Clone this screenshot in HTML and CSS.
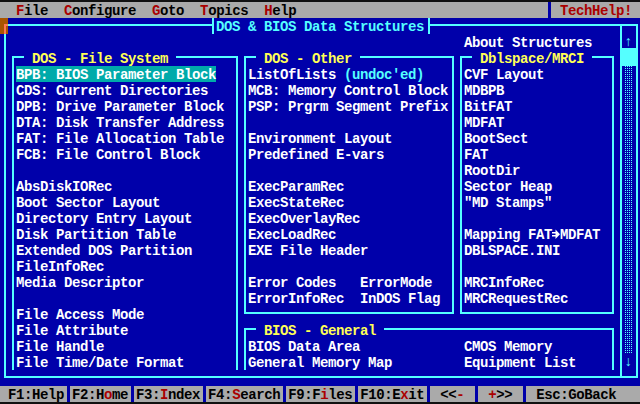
FILE: index.html
```html
<!DOCTYPE html>
<html>
<head>
<meta charset="utf-8">
<title>TechHelp! - DOS &amp; BIOS Data Structures</title>
<link rel="stylesheet" href="styles.css">
</head>
<body>
<div class="screen">
  <div class="menubar">
    <div class="menu-items t">  <span class="hot">F</span>ile  <span class="hot">C</span>onfigure  <span class="hot">G</span>oto  <span class="hot">T</span>opics  <span class="hot">H</span>elp</div>
    <div class="menu-sep"></div>
    <div class="brand t"> TechHelp!</div>
  </div>

  <div class="frame"></div>
  <div class="closebox"></div>
  <div class="title t">DOS &amp; BIOS Data Structures</div>
  <div class="about t">About Structures</div>

  <div class="box box-fs open"></div>
  <div class="legend t lg-fs"> DOS - File System </div>
  <div class="list list-fs">
    <div class="line"><span class="sel">BPB: BIOS Parameter Block</span></div>
    <div class="line">CDS: Current Directories</div>
    <div class="line">DPB: Drive Parameter Block</div>
    <div class="line">DTA: Disk Transfer Address</div>
    <div class="line">FAT: File Allocation Table</div>
    <div class="line">FCB: File Control Block</div>
    <div class="line"></div>
    <div class="line">AbsDiskIORec</div>
    <div class="line">Boot Sector Layout</div>
    <div class="line">Directory Entry Layout</div>
    <div class="line">Disk Partition Table</div>
    <div class="line">Extended DOS Partition</div>
    <div class="line">FileInfoRec</div>
    <div class="line">Media Descriptor</div>
    <div class="line"></div>
    <div class="line">File Access Mode</div>
    <div class="line">File Attribute</div>
    <div class="line">File Handle</div>
    <div class="line">File Time/Date Format</div>
  </div>

  <div class="box box-other"></div>
  <div class="legend t lg-other"> DOS - Other </div>
  <div class="list list-other">
    <div class="line">ListOfLists <span class="cy">(undoc'ed)</span></div>
    <div class="line">MCB: Memory Control Block</div>
    <div class="line">PSP: Prgrm Segment Prefix</div>
    <div class="line"></div>
    <div class="line">Environment Layout</div>
    <div class="line">Predefined E-vars</div>
    <div class="line"></div>
    <div class="line">ExecParamRec</div>
    <div class="line">ExecStateRec</div>
    <div class="line">ExecOverlayRec</div>
    <div class="line">ExecLoadRec</div>
    <div class="line">EXE File Header</div>
    <div class="line"></div>
    <div class="line">Error Codes   ErrorMode</div>
    <div class="line">ErrorInfoRec  InDOS Flag</div>
  </div>

  <div class="box box-dbl"></div>
  <div class="legend t lg-dbl"> Dblspace/MRCI </div>
  <div class="list list-dbl">
    <div class="line">CVF Layout</div>
    <div class="line">MDBPB</div>
    <div class="line">BitFAT</div>
    <div class="line">MDFAT</div>
    <div class="line">BootSect</div>
    <div class="line">FAT</div>
    <div class="line">RootDir</div>
    <div class="line">Sector Heap</div>
    <div class="line">"MD Stamps"</div>
    <div class="line"></div>
    <div class="line">Mapping FAT<svg class="arrow" width="8" height="16" viewBox="0 0 8 16"><rect x="0" y="6" width="4" height="1.5" fill="#fff"/><rect x="0" y="9" width="4" height="1.5" fill="#fff"/><polygon points="3.5,3.5 8,8.25 3.5,13" fill="#fff"/></svg>MDFAT</div>
    <div class="line">DBLSPACE.INI</div>
    <div class="line"></div>
    <div class="line">MRCInfoRec</div>
    <div class="line">MRCRequestRec</div>
  </div>

  <div class="box box-bios open"></div>
  <div class="legend t lg-bios"> BIOS - General </div>
  <div class="list list-bios-l">
    <div class="line">BIOS Data Area</div>
    <div class="line">General Memory Map</div>
  </div>
  <div class="list list-bios-r">
    <div class="line">CMOS Memory</div>
    <div class="line">Equipment List</div>
  </div>

  <div class="sbar">
    <div class="sb-up t">↑</div>
    <div class="sb-thumb"></div>
    <div class="sb-track"></div>
    <div class="sb-down t">↓</div>
  </div>

  <div class="footer">
    <span class="fk t"> F1:Help</span><span class="fsep"></span><span class="fk t">F2:H<span class="hot">o</span>me</span><span class="fsep"></span><span class="fk t">F3:<span class="hot">I</span>ndex</span><span class="fsep"></span><span class="fk t">F4:<span class="hot">S</span>earch</span><span class="fsep"></span><span class="fk t">F9:F<span class="hot">i</span>les</span><span class="fsep"></span><span class="fk t">F10:E<span class="hot">x</span>it</span><span class="fsep"></span><span class="fk t"> &lt;&lt;<span class="hot">-</span> </span><span class="fsep"></span><span class="fk t"> <span class="hot">+</span>&gt;&gt; </span><span class="fsep"></span><span class="fk t"> Esc:GoBack</span>
  </div>
</div>
</body>
</html>
```

FILE: styles.css
```css
html, body {
  margin: 0;
  padding: 0;
  background: #101010;
}

.screen {
  width: 640px;
  display: grid;
  grid-template-columns: repeat(80, 8px);
  grid-template-rows: repeat(25, 16px);
  background: #0000aa;
  border-top: 2px solid #101010;
  border-bottom: 2px solid #101010;
  font-family: "Liberation Mono", "DejaVu Sans Mono", monospace;
  font-size: 14px;
  font-weight: 700;
  letter-spacing: -0.4px;
  line-height: 18px;
  color: #ffffff;
}

.t {
  white-space: pre;
}

.hot {
  color: #aa0000;
}

/* menu bar */
.menubar {
  grid-row: 1;
  grid-column: 1 / -1;
  background: #aaaaaa;
  color: #000000;
  display: flex;
}

.menu-items {
  width: 544px;
}

.menu-sep {
  width: 8px;
  height: 16px;
  background: linear-gradient(to right, transparent 4px, #0000aa 4px, #0000aa 7px, transparent 7px);
}

.brand {
  color: #aa0000;
}

/* main window */
.frame {
  grid-row: 2 / 25;
  grid-column: 1 / -1;
  margin: 6px 2px 8px 4px;
  border: 2px solid #55ffff;
}

.closebox {
  grid-row: 2;
  grid-column: 1;
  background: #aa5500;
}

.closebox::after {
  content: "";
  display: block;
  margin: 6px 0 0 4px;
  height: 8px;
  border-top: 2px solid #ff7755;
  border-left: 2px solid #ff7755;
}

.title {
  grid-row: 2;
  grid-column: 27 / 55;
  margin-left: 4px;
  margin-right: 2px;
  padding-left: 2px;
  border-left: 2px solid #55ffff;
  border-right: 2px solid #55ffff;
  background: #0000aa;
  color: #55ffff;
}

.about {
  grid-row: 3;
  grid-column: 59 / 77;
}

/* group boxes */
.box {
  margin: 6px 2px 8px 4px;
  border: 2px solid #55ffff;
}

.box.open {
  border-bottom: none;
  margin-bottom: 0;
}

.box-fs {
  grid-row: 4 / 24;
  grid-column: 2 / 31;
}

.box-other {
  grid-row: 4 / 21;
  grid-column: 31 / 58;
}

.box-dbl {
  grid-row: 4 / 21;
  grid-column: 58 / 78;
}

.box-bios {
  grid-row: 21 / 24;
  grid-column: 31 / 78;
}

.legend {
  background: #0000aa;
  color: #ffff55;
}

.lg-fs {
  grid-row: 4;
  grid-column: 4 / 23;
}

.lg-other {
  grid-row: 4;
  grid-column: 33 / 46;
}

.lg-dbl {
  grid-row: 4;
  grid-column: 60 / 75;
}

.lg-bios {
  grid-row: 21;
  grid-column: 33 / 49;
}

/* lists */
.list {
  display: flex;
  flex-direction: column;
}

.line {
  height: 16px;
  white-space: pre;
}

.sel {
  display: inline-block;
  height: 16px;
  background: #00aaaa;
  color: #ffffff;
}

.cy {
  color: #55ffff;
}

.arrow {
  display: inline-block;
  vertical-align: top;
}

.list-fs {
  grid-row: 5 / 24;
  grid-column: 3 / 30;
}

.list-other {
  grid-row: 5 / 20;
  grid-column: 32 / 57;
}

.list-dbl {
  grid-row: 5 / 20;
  grid-column: 59 / 77;
}

.list-bios-l {
  grid-row: 22 / 24;
  grid-column: 32 / 59;
}

.list-bios-r {
  grid-row: 22 / 24;
  grid-column: 59 / 77;
}

/* scroll bar */
.sbar {
  grid-row: 2 / 25;
  grid-column: 78 / 81;
  margin: 6px 2px 8px 4px;
  border: 2px solid #55ffff;
  padding-bottom: 6px;
  display: flex;
  flex-direction: column;
  color: #55ffff;
  line-height: 16px;
}

.sb-up {
  height: 14px;
  padding-top: 8px;
  padding-left: 2px;
  border-bottom: 2px solid #55ffff;
}

.sb-thumb {
  height: 16px;
  margin: 0 -2px;
  background: #55ffff;
}

.sb-track {
  flex: 1;
  width: 8px;
  margin-left: 2px;
  background: conic-gradient(#55ffff 0 25%, transparent 0 100%) 0 0 / 2px 2px;
}

.sb-down {
  height: 16px;
  padding-left: 2px;
}

/* footer */
.footer {
  grid-row: 25;
  grid-column: 1 / -1;
  background: #aaaaaa;
  color: #000000;
  display: flex;
}

.fsep {
  width: 8px;
  height: 16px;
  flex: none;
  background: linear-gradient(to right, transparent 3px, #0000aa 3px, #0000aa 6px, transparent 6px);
}
```
